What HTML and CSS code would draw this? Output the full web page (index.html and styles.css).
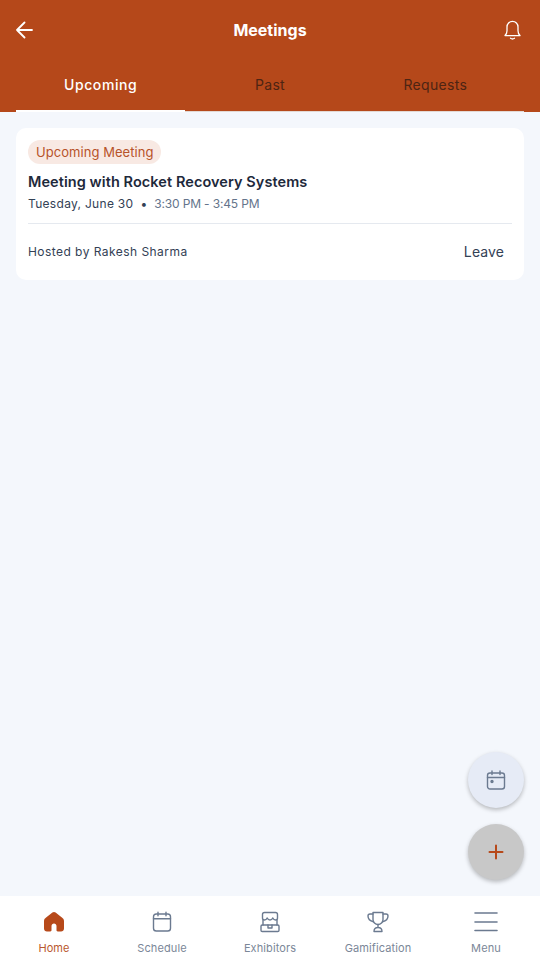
FILE: index.html
```html
<!DOCTYPE html>
<html lang="en">
<head>
    <meta charset="UTF-8">
    <meta name="viewport" content="width=device-width, initial-scale=1.0">
    <title>Meetings</title>
    <link rel="stylesheet" href="styles.css">
</head>
<body>
    <div class="app">
        <!-- Header -->
        <header class="header">
            <div class="topbar">
                <svg width="20" height="20" viewBox="0 0 20 20" fill="none" stroke="#fff" stroke-width="1.800" stroke-linecap="round" stroke-linejoin="round">
                    <path d="M1 10h15M8.500 2.500L1 10l7.500 7.500"/>
                </svg>
                <h1>Meetings</h1>
                <svg width="20" height="20" viewBox="0 0 20 20" fill="none" stroke="#fff" stroke-width="1.300" stroke-linecap="round" stroke-linejoin="round">
                    <path d="M1 15.600c1.300-1.200 2-2.800 2-4.800V7c0-3.200 2.400-5.600 5.500-5.600S14 3.800 14 7v3.800c0 2 .7 3.600 2 4.800z"/>
                    <path d="M6.500 18.300c1.200.8 2.800.8 4 0"/>
                </svg>
            </div>
            <nav class="tabs">
                <div class="tab active">Upcoming</div>
                <div class="tab">Past</div>
                <div class="tab">Requests</div>
            </nav>
        </header>

        <!-- Meeting list -->
        <main class="content">
            <div class="card">
                <span class="badge">Upcoming Meeting</span>
                <div class="card-title">Meeting with Rocket Recovery Systems</div>
                <div class="card-time">
                    <span class="date">Tuesday, June 30</span>
                    <span class="dot">•</span>
                    <span class="hours">3:30 PM - 3:45 PM</span>
                </div>
                <div class="card-footer">
                    <span class="host">Hosted by Rakesh Sharma</span>
                    <span class="leave">Leave</span>
                </div>
            </div>
        </main>

        <!-- Floating buttons -->
        <div class="fabs">
            <div class="fab fab-calendar">
                <svg width="20" height="20" viewBox="0 0 20 20" fill="none" stroke="#6b7a90" stroke-width="1.400" stroke-linecap="round" stroke-linejoin="round">
                    <rect x="1.500" y="3" width="17" height="16" rx="2.500"/>
                    <path d="M1.500 7.500h17M6 1v3.500M14 1v3.500"/>
                    <circle cx="6" cy="11.500" r="1" fill="#6b7a90"/>
                </svg>
            </div>
            <div class="fab fab-add">
                <svg width="18" height="18" viewBox="0 0 18 18" fill="none" stroke="#b7491a" stroke-width="2" stroke-linecap="round">
                    <path d="M9 2.500v13M2.500 9h13"/>
                </svg>
            </div>
        </div>

        <!-- Bottom nav -->
        <footer class="bottom-nav">
            <div class="nav-item active">
                <svg width="24" height="24" viewBox="0 0 24 24" fill="#b7491a">
                    <path d="M12 2c-.6 0-1.100.2-1.600.6L3.800 7.800C3.300 8.200 2 9.200 2 11v7.500c0 1.700 1.300 3 3 3h3.300c.7 0 1.200-.5 1.200-1.200v-4.300c0-1.400 1.100-2.500 2.500-2.500s2.500 1.100 2.500 2.500v4.300c0 .7.500 1.200 1.200 1.200H19c1.700 0 3-1.300 3-3V11c0-1.800-1.300-2.800-1.800-3.200l-6.600-5.200C13.100 2.200 12.600 2 12 2z"/>
                </svg>
                <span>Home</span>
            </div>
            <div class="nav-item">
                <svg width="24" height="24" viewBox="0 0 24 24" fill="none" stroke="#6b7a90" stroke-width="1.400" stroke-linecap="round" stroke-linejoin="round">
                    <rect x="3.500" y="4" width="17" height="17" rx="2.800"/>
                    <path d="M3.500 8.800h17M8 2.200v3.500M16 2.200v3.500"/>
                </svg>
                <span>Schedule</span>
            </div>
            <div class="nav-item">
                <svg width="24" height="24" viewBox="0 0 24 24" fill="none" stroke="#6b7a90" stroke-width="1.400" stroke-linecap="round" stroke-linejoin="round">
                    <path d="M6.500 2.500h11A2 2 0 0 1 19.500 4.500V8c0 1.200-1 2-2 2-1.300 0-2.200-1-2.700-2-.5 1-1.500 2-2.800 2s-2.300-1-2.800-2c-.5 1-1.400 2-2.700 2-1 0-2-.8-2-2V4.500a2 2 0 0 1 2-2z"/>
                    <path d="M5 10v5M19 10v5"/>
                    <rect x="3" y="15" width="18" height="6.500" rx="1.200"/>
                    <path d="M10 15v3h4v-3"/>
                </svg>
                <span>Exhibitors</span>
            </div>
            <div class="nav-item">
                <svg width="24" height="24" viewBox="0 0 24 24" fill="none" stroke="#6b7a90" stroke-width="1.400" stroke-linecap="round" stroke-linejoin="round">
                    <path d="M7 2.500h10v7a5 5 0 0 1-10 0z"/>
                    <path d="M7 4H4c-1 0-2 .8-2 2 0 2.800 2 5 5.500 5.800M17 4h3c1 0 2 .8 2 2 0 2.800-2 5-5.500 5.800"/>
                    <path d="M12 14.500v3M8 21.500c0-2.400 1.700-4 4-4s4 1.600 4 4z"/>
                </svg>
                <span>Gamification</span>
            </div>
            <div class="nav-item">
                <svg width="24" height="24" viewBox="0 0 24 24" fill="none" stroke="#6b7a90" stroke-width="1.600" stroke-linecap="round">
                    <path d="M1 3h22M1 12h22M1 20.500h22"/>
                </svg>
                <span>Menu</span>
            </div>
        </footer>
    </div>
</body>
</html>
```

FILE: styles.css
```css
* {
    box-sizing: border-box;
}
body {
    margin: 0;
    font-family: "Inter", "Open Sans", sans-serif;
    background-color: #f4f7fc;
}
.app {
    position: relative;
    display: flex;
    flex-direction: column;
    height: 960px;
    overflow: hidden;
}

/* Header */
.header {
    background-color: #b5481a;
    padding: 0 16px;
}
.topbar {
    display: flex;
    align-items: center;
    justify-content: space-between;
    height: 60px;
}
.topbar h1 {
    margin: 0;
    font-size: 16px;
    font-weight: 700;
    color: #fff;
}
.tabs {
    display: grid;
    grid-template-columns: repeat(3, 1fr);
}
.tab {
    height: 52px;
    padding-top: 16px;
    text-align: center;
    font-size: 14px;
    letter-spacing: 0.3px;
    color: #4d2413;
    border-bottom: 1px solid #e3d9d4;
}
.tab:last-child {
    padding-right: 8px;
}
.tab.active {
    color: #fff;
    font-weight: 500;
    letter-spacing: 0.6px;
    border-bottom: 2px solid #fff;
}

/* Card */
.content {
    flex: 1;
    padding: 16px;
}
.card {
    background: #fff;
    border-radius: 10px;
    padding: 12px;
    height: 152px;
}
.badge {
    display: inline-block;
    height: 24px;
    line-height: 24px;
    padding: 0 8px;
    border-radius: 12px;
    background-color: #f8e9e3;
    color: #b7532a;
    font-size: 13px;
    letter-spacing: 0.05px;
}
.card-title {
    margin-top: 8px;
    font-size: 14.500px;
    font-weight: 600;
    line-height: 20px;
    letter-spacing: 0.07px;
    color: #1e293b;
}
.card-time {
    display: flex;
    gap: 7px;
    margin-top: 4px;
    font-size: 12px;
    line-height: 16px;
    color: #64748b;
}
.card-time .date {
    color: #334155;
    letter-spacing: 0.3px;
}
.card-time .dot {
    color: #334155;
}
.card-time .hours {
    letter-spacing: -0.15px;
}
.card-footer {
    display: flex;
    align-items: center;
    justify-content: space-between;
    margin-top: 11px;
    padding: 0 8px 2px 0;
    height: 57px;
    border-top: 1px solid #e5e9ef;
}
.host {
    font-size: 12px;
    letter-spacing: 0.45px;
    color: #334155;
}
.leave {
    font-size: 14px;
    letter-spacing: 0.1px;
    color: #334155;
}

/* Floating buttons */
.fabs {
    position: absolute;
    right: 16px;
    bottom: 80px;
    display: flex;
    flex-direction: column;
    gap: 16px;
}
.fab {
    display: flex;
    align-items: center;
    justify-content: center;
    width: 56px;
    height: 56px;
    border-radius: 50%;
    box-shadow: 0 2px 4px rgba(0, 0, 0, 0.25);
}
.fab-calendar {
    background-color: #e6ebf6;
}
.fab-add {
    background-color: #c8c8c8;
}

/* Bottom nav */
.bottom-nav {
    display: flex;
    height: 64px;
    background: #fff;
}
.nav-item {
    flex: 1;
    display: flex;
    flex-direction: column;
    align-items: center;
    padding-top: 14px;
    gap: 6px;
    font-size: 11px;
    line-height: 16px;
    letter-spacing: 0.1px;
    color: #7b8798;
}
.nav-item.active {
    color: #b9582e;
}
```
